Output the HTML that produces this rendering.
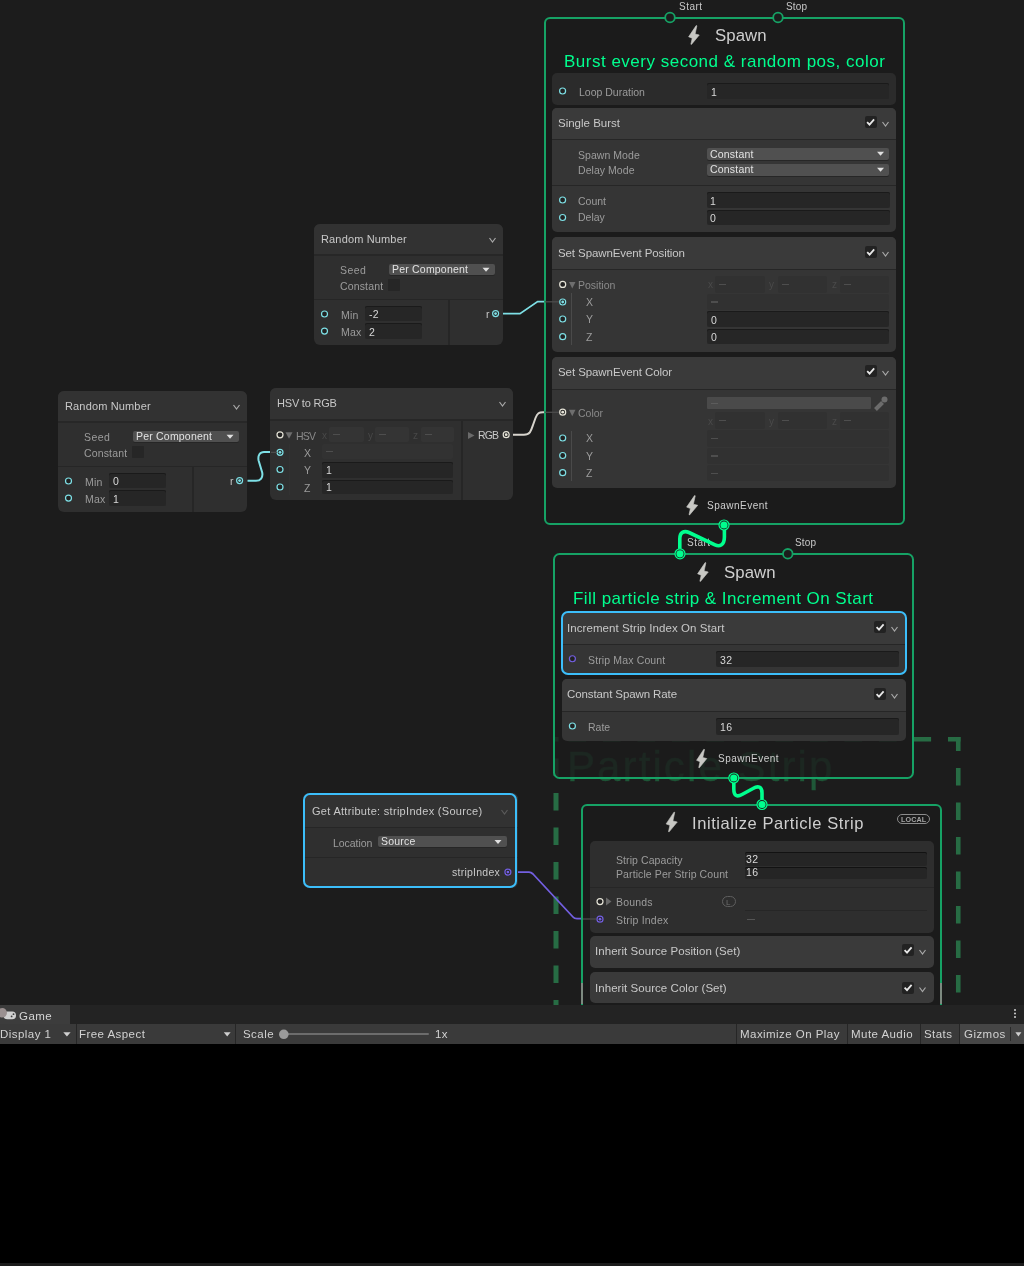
<!DOCTYPE html><html><head><meta charset="utf-8"><style>html,body{margin:0;padding:0;width:1024px;height:1266px;overflow:hidden;background:#1c1c1c;}.r,.t{position:absolute;}.t{white-space:nowrap;font-family:"Liberation Sans",sans-serif;will-change:transform;}svg{position:absolute;left:0;top:0;}#graph{position:absolute;left:0;top:0;width:1024px;height:1005px;overflow:hidden;background:#1c1c1c;}</style></head><body><div id="graph"><svg width="1024" height="1005"><line x1="553" y1="739.25" x2="960.5" y2="739.25" stroke="#276c44" stroke-width="4.5" stroke-dasharray="17.6 16.9" stroke-dashoffset="19"/><line x1="556" y1="737" x2="556" y2="1005" stroke="#276c44" stroke-width="5" stroke-dasharray="17.6 16.9" stroke-dashoffset="13"/><line x1="958.25" y1="737" x2="958.25" y2="1004" stroke="#276c44" stroke-width="4.6" stroke-dasharray="17.6 16.9" stroke-dashoffset="3.5"/></svg><div class="t" style="left:566.60px;top:746.45px;font-size:42px;line-height:42px;color:#1f5838;letter-spacing:2.1px;-webkit-text-stroke:0.3px #1f5838;">Particle Strip</div><svg width="1024" height="1005"><path d="M503,313.7 L520,313.7 L537.6,301.6 L545,301.6" fill="none" stroke="#7ee0e6" stroke-width="1.8"/><path d="M247.5,480.8 L256,480.8 C260.5,480.8 263.2,477.5 262.2,472.5 L258.6,460.5 C257.6,455.5 260,451.9 264,451.9 L271,451.9" fill="none" stroke="#7ee0e6" stroke-width="2"/><path d="M513,434.7 L524,434.7 C530,434.7 531,431 533,425 L535.5,418 C537.5,413 539,412.2 543,412.2 L545,412.2" fill="none" stroke="#d7d4cd" stroke-width="2"/><path d="M517.6,872.1 L529,872.1 C531,872.1 532,873 533,874 L573,917 C574,918.3 575,918.7 577,918.7 L583,918.7" fill="none" stroke="#735fe1" stroke-width="1.8"/></svg><div class="r" style="left:314.00px;top:223.50px;width:189.00px;height:121.00px;background:#2f2f2f;border-radius:6px;"></div><div class="r" style="left:314.00px;top:223.50px;width:189.00px;height:31.50px;background:#323232;border-radius:6px 6px 0 0;"></div><div class="r" style="left:314.00px;top:254.00px;width:189.00px;height:2.20px;background:#272727;"></div><div class="t" style="left:320.80px;top:234.39px;font-size:11px;line-height:11px;color:#c8c8c8;letter-spacing:0.15px;">Random Number</div><div class="t" style="left:340.25px;top:265.21px;font-size:10.5px;line-height:10.5px;color:#9c9c9c;letter-spacing:0.4px;">Seed</div><div class="t" style="left:340.25px;top:280.61px;font-size:10.5px;line-height:10.5px;color:#9c9c9c;letter-spacing:0.15px;">Constant</div><div class="r" style="left:388.25px;top:279.25px;width:11.75px;height:11.25px;background:#262626;border-radius:1px;"></div><div class="r" style="left:389.25px;top:264.00px;width:105.25px;height:11.00px;background:#505050;border-radius:2px;box-shadow:0 1px 0 #262626;"></div><div class="t" style="left:392.25px;top:263.71px;font-size:10.5px;line-height:10.5px;color:#e2e2e2;letter-spacing:0.2px;">Per Component</div><div class="r" style="left:314.00px;top:298.50px;width:189.00px;height:1.80px;background:#262626;"></div><div class="r" style="left:448.00px;top:300.25px;width:2.00px;height:44.25px;background:#262626;"></div><div class="t" style="left:340.50px;top:309.61px;font-size:10.5px;line-height:10.5px;color:#9c9c9c;letter-spacing:0.2px;">Min</div><div class="t" style="left:340.50px;top:326.51px;font-size:10.5px;line-height:10.5px;color:#9c9c9c;letter-spacing:0.2px;">Max</div><div class="r" style="left:365.25px;top:306.10px;width:56.25px;height:15.40px;background:#262626;border-radius:2px;box-shadow:inset 0 1px 0 #1a1a1a;"></div><div class="t" style="left:368.75px;top:309.01px;font-size:10.5px;line-height:10.5px;color:#d8d8d8;letter-spacing:0.3px;">-2</div><div class="r" style="left:365.25px;top:323.40px;width:56.25px;height:15.85px;background:#262626;border-radius:2px;box-shadow:inset 0 1px 0 #1a1a1a;"></div><div class="t" style="left:368.75px;top:326.76px;font-size:10.5px;line-height:10.5px;color:#d8d8d8;letter-spacing:0.3px;">2</div><div class="t" style="left:485.60px;top:308.81px;font-size:10.5px;line-height:10.5px;color:#c8c8c8;">r</div><div class="r" style="left:58.00px;top:390.50px;width:189.00px;height:121.00px;background:#2f2f2f;border-radius:6px;"></div><div class="r" style="left:58.00px;top:390.50px;width:189.00px;height:31.50px;background:#323232;border-radius:6px 6px 0 0;"></div><div class="r" style="left:58.00px;top:421.00px;width:189.00px;height:2.20px;background:#272727;"></div><div class="t" style="left:64.80px;top:401.39px;font-size:11px;line-height:11px;color:#c8c8c8;letter-spacing:0.15px;">Random Number</div><div class="t" style="left:84.25px;top:432.21px;font-size:10.5px;line-height:10.5px;color:#9c9c9c;letter-spacing:0.4px;">Seed</div><div class="t" style="left:84.25px;top:447.61px;font-size:10.5px;line-height:10.5px;color:#9c9c9c;letter-spacing:0.15px;">Constant</div><div class="r" style="left:132.25px;top:446.25px;width:11.75px;height:11.25px;background:#262626;border-radius:1px;"></div><div class="r" style="left:133.25px;top:431.00px;width:105.25px;height:11.00px;background:#505050;border-radius:2px;box-shadow:0 1px 0 #262626;"></div><div class="t" style="left:136.25px;top:430.71px;font-size:10.5px;line-height:10.5px;color:#e2e2e2;letter-spacing:0.2px;">Per Component</div><div class="r" style="left:58.00px;top:465.50px;width:189.00px;height:1.80px;background:#262626;"></div><div class="r" style="left:192.00px;top:467.25px;width:2.00px;height:44.25px;background:#262626;"></div><div class="t" style="left:84.50px;top:476.61px;font-size:10.5px;line-height:10.5px;color:#9c9c9c;letter-spacing:0.2px;">Min</div><div class="t" style="left:84.50px;top:493.51px;font-size:10.5px;line-height:10.5px;color:#9c9c9c;letter-spacing:0.2px;">Max</div><div class="r" style="left:109.25px;top:473.10px;width:56.25px;height:15.40px;background:#262626;border-radius:2px;box-shadow:inset 0 1px 0 #1a1a1a;"></div><div class="t" style="left:112.75px;top:476.01px;font-size:10.5px;line-height:10.5px;color:#d8d8d8;letter-spacing:0.3px;">0</div><div class="r" style="left:109.25px;top:490.40px;width:56.25px;height:15.85px;background:#262626;border-radius:2px;box-shadow:inset 0 1px 0 #1a1a1a;"></div><div class="t" style="left:112.75px;top:493.76px;font-size:10.5px;line-height:10.5px;color:#d8d8d8;letter-spacing:0.3px;">1</div><div class="t" style="left:229.60px;top:475.81px;font-size:10.5px;line-height:10.5px;color:#c8c8c8;">r</div><div class="r" style="left:270.30px;top:388.40px;width:242.40px;height:111.60px;background:#2f2f2f;border-radius:6px;"></div><div class="r" style="left:270.30px;top:388.40px;width:242.40px;height:31.60px;background:#323232;border-radius:6px 6px 0 0;"></div><div class="r" style="left:270.30px;top:419.00px;width:242.40px;height:2.20px;background:#272727;"></div><div class="t" style="left:277.30px;top:398.39px;font-size:11px;line-height:11px;color:#c8c8c8;letter-spacing:-0.2px;">HSV to RGB</div><div class="r" style="left:460.50px;top:421.00px;width:2.00px;height:79.00px;background:#262626;"></div><div class="t" style="left:296.40px;top:430.81px;font-size:10.5px;line-height:10.5px;color:#8a8a8a;letter-spacing:-0.8px;">HSV</div><div class="t" style="left:322.00px;top:431.04px;font-size:10px;line-height:10px;color:#484848;">x</div><div class="r" style="left:329.20px;top:427.30px;width:34.40px;height:14.70px;background:#343434;border-radius:2px;"></div><div class="r" style="left:333.20px;top:434.15px;width:7.00px;height:1.20px;background:#4e4e4e;"></div><div class="t" style="left:368.00px;top:431.04px;font-size:10px;line-height:10px;color:#484848;">y</div><div class="r" style="left:375.00px;top:427.30px;width:34.00px;height:14.70px;background:#343434;border-radius:2px;"></div><div class="r" style="left:379.00px;top:434.15px;width:7.00px;height:1.20px;background:#4e4e4e;"></div><div class="t" style="left:412.50px;top:431.04px;font-size:10px;line-height:10px;color:#484848;">z</div><div class="r" style="left:420.80px;top:427.30px;width:33.00px;height:14.70px;background:#343434;border-radius:2px;"></div><div class="r" style="left:424.80px;top:434.15px;width:7.00px;height:1.20px;background:#4e4e4e;"></div><div class="r" style="left:288.60px;top:444.00px;width:1.00px;height:50.50px;background:#323232;"></div><div class="t" style="left:304.20px;top:447.81px;font-size:10.5px;line-height:10.5px;color:#9c9c9c;">X</div><div class="t" style="left:304.20px;top:465.21px;font-size:10.5px;line-height:10.5px;color:#9c9c9c;">Y</div><div class="t" style="left:304.20px;top:482.61px;font-size:10.5px;line-height:10.5px;color:#9c9c9c;">Z</div><div class="r" style="left:322.20px;top:443.70px;width:131.30px;height:15.60px;background:#323232;border-radius:2px;"></div><div class="r" style="left:326.20px;top:451.00px;width:7.00px;height:1.20px;background:#4e4e4e;"></div><div class="r" style="left:322.20px;top:462.00px;width:131.30px;height:15.80px;background:#262626;border-radius:2px;box-shadow:inset 0 1px 0 #1a1a1a;"></div><div class="t" style="left:325.70px;top:465.31px;font-size:10.5px;line-height:10.5px;color:#d8d8d8;letter-spacing:0.3px;">1</div><div class="r" style="left:322.20px;top:479.60px;width:131.30px;height:14.90px;background:#262626;border-radius:2px;box-shadow:inset 0 1px 0 #1a1a1a;"></div><div class="t" style="left:325.70px;top:482.01px;font-size:10.5px;line-height:10.5px;color:#d8d8d8;letter-spacing:0.3px;">1</div><div class="t" style="left:477.60px;top:430.31px;font-size:10.5px;line-height:10.5px;color:#c8c8c8;letter-spacing:-0.9px;">RGB</div><div class="r" style="left:303.00px;top:793.30px;width:214.60px;height:95.00px;background:#2f2f2f;border-radius:6px;"></div><div class="r" style="left:303.00px;top:793.30px;width:214.60px;height:34.00px;background:#323232;border-radius:6px 6px 0 0;"></div><div class="r" style="left:303.00px;top:827.30px;width:214.60px;height:1.00px;background:#262626;"></div><div class="r" style="left:303.00px;top:857.20px;width:214.60px;height:1.00px;background:#262626;"></div><div class="r" style="left:302.70px;top:793.00px;width:210.40px;height:90.80px;border:2.4px solid #3cbefa;border-radius:7px;background:transparent;"></div><div class="t" style="left:312.25px;top:806.49px;font-size:11px;line-height:11px;color:#c8c8c8;letter-spacing:0.3px;">Get Attribute: stripIndex (Source)</div><div class="t" style="left:332.50px;top:837.91px;font-size:10.5px;line-height:10.5px;color:#9c9c9c;letter-spacing:-0.05px;">Location</div><div class="r" style="left:377.50px;top:836.10px;width:129.00px;height:11.30px;background:#505050;border-radius:2px;box-shadow:0 1px 0 #262626;"></div><div class="t" style="left:380.50px;top:836.11px;font-size:10.5px;line-height:10.5px;color:#e2e2e2;letter-spacing:0.2px;">Source</div><div class="t" style="left:452.20px;top:867.41px;font-size:10.5px;line-height:10.5px;color:#c8c8c8;letter-spacing:0.25px;">stripIndex</div><div class="r" style="left:544.00px;top:17.00px;width:357.00px;height:504.00px;border:2px solid #16a265;border-radius:6px;background:rgba(28,28,28,0.8);"></div><div class="t" style="left:678.50px;top:2.23px;font-size:10px;line-height:10px;color:#c8c8c8;letter-spacing:0.47px;">Start</div><div class="t" style="left:785.50px;top:2.23px;font-size:10px;line-height:10px;color:#c8c8c8;letter-spacing:0.15px;">Stop</div><div class="t" style="left:714.80px;top:28.28px;font-size:16.8px;line-height:16.8px;color:#cfcfcf;letter-spacing:0.05px;">Spawn</div><div class="t" style="left:563.50px;top:52.81px;font-size:17px;line-height:17px;color:#00fe8e;letter-spacing:0.5px;">Burst every second &amp; random pos, color</div><div class="r" style="left:552.00px;top:73.00px;width:344.00px;height:32.00px;background:#2b2b2b;border-radius:5px;"></div><div class="t" style="left:578.50px;top:86.81px;font-size:10.5px;line-height:10.5px;color:#9c9c9c;">Loop Duration</div><div class="r" style="left:707.00px;top:83.00px;width:182.00px;height:16.00px;background:#262626;border-radius:2px;box-shadow:inset 0 1px 0 #1a1a1a;"></div><div class="t" style="left:710.50px;top:86.51px;font-size:10.5px;line-height:10.5px;color:#d8d8d8;letter-spacing:0.3px;">1</div><div class="r" style="left:552.00px;top:108.00px;width:344.00px;height:124.00px;background:#353535;border-radius:5px;"></div><div class="r" style="left:552.00px;top:108.00px;width:344.00px;height:31.00px;background:#3a3a3a;border-radius:5px 5px 0 0;"></div><div class="r" style="left:552.00px;top:139.00px;width:344.00px;height:1.00px;background:#262626;"></div><div class="t" style="left:558.30px;top:118.27px;font-size:11.5px;line-height:11.5px;color:#c8c8c8;">Single Burst</div><div class="r" style="left:864.50px;top:116.00px;width:12.00px;height:12.00px;background:#222222;border-radius:2px;"></div><div class="t" style="left:578.40px;top:149.71px;font-size:10.5px;line-height:10.5px;color:#9c9c9c;letter-spacing:0.05px;">Spawn Mode</div><div class="t" style="left:578.40px;top:165.31px;font-size:10.5px;line-height:10.5px;color:#9c9c9c;letter-spacing:0.05px;">Delay Mode</div><div class="r" style="left:707.00px;top:148.00px;width:182.00px;height:12.00px;background:#505050;border-radius:2px;box-shadow:0 1px 0 #262626;"></div><div class="t" style="left:710.00px;top:148.71px;font-size:10.5px;line-height:10.5px;color:#e2e2e2;letter-spacing:0.2px;">Constant</div><div class="r" style="left:707.00px;top:164.00px;width:182.00px;height:11.50px;background:#505050;border-radius:2px;box-shadow:0 1px 0 #262626;"></div><div class="t" style="left:710.00px;top:164.21px;font-size:10.5px;line-height:10.5px;color:#e2e2e2;letter-spacing:0.2px;">Constant</div><div class="r" style="left:552.00px;top:185.00px;width:344.00px;height:1.00px;background:#262626;"></div><div class="t" style="left:578.40px;top:196.01px;font-size:10.5px;line-height:10.5px;color:#9c9c9c;">Count</div><div class="t" style="left:578.40px;top:212.21px;font-size:10.5px;line-height:10.5px;color:#9c9c9c;">Delay</div><div class="r" style="left:706.50px;top:192.30px;width:183.00px;height:16.10px;background:#262626;border-radius:2px;box-shadow:inset 0 1px 0 #1a1a1a;"></div><div class="t" style="left:710.00px;top:195.91px;font-size:10.5px;line-height:10.5px;color:#d8d8d8;letter-spacing:0.3px;">1</div><div class="r" style="left:706.50px;top:209.90px;width:183.00px;height:15.60px;background:#262626;border-radius:2px;box-shadow:inset 0 1px 0 #1a1a1a;"></div><div class="t" style="left:710.00px;top:213.01px;font-size:10.5px;line-height:10.5px;color:#d8d8d8;letter-spacing:0.3px;">0</div><div class="r" style="left:552.00px;top:237.00px;width:344.00px;height:114.50px;background:#353535;border-radius:5px;"></div><div class="r" style="left:552.00px;top:237.00px;width:344.00px;height:32.00px;background:#3a3a3a;border-radius:5px 5px 0 0;"></div><div class="r" style="left:552.00px;top:269.00px;width:344.00px;height:1.00px;background:#262626;"></div><div class="t" style="left:558.40px;top:248.27px;font-size:11.5px;line-height:11.5px;color:#c8c8c8;letter-spacing:-0.1px;">Set SpawnEvent Position</div><div class="r" style="left:864.60px;top:246.00px;width:12.00px;height:12.00px;background:#222222;border-radius:2px;"></div><div class="t" style="left:578.30px;top:280.21px;font-size:10.5px;line-height:10.5px;color:#8a8a8a;">Position</div><div class="r" style="left:571.00px;top:293.00px;width:1.00px;height:52.00px;background:#4a4a4a;"></div><div class="t" style="left:586.00px;top:296.61px;font-size:10.5px;line-height:10.5px;color:#9c9c9c;">X</div><div class="t" style="left:586.00px;top:314.11px;font-size:10.5px;line-height:10.5px;color:#9c9c9c;">Y</div><div class="t" style="left:586.00px;top:331.61px;font-size:10.5px;line-height:10.5px;color:#9c9c9c;">Z</div><div class="t" style="left:707.50px;top:280.04px;font-size:10px;line-height:10px;color:#4a4a4a;">x</div><div class="r" style="left:715.00px;top:276.00px;width:50.00px;height:16.60px;background:#313131;border-radius:2px;"></div><div class="r" style="left:719.00px;top:283.80px;width:7.00px;height:1.20px;background:#4e4e4e;"></div><div class="t" style="left:769.00px;top:280.04px;font-size:10px;line-height:10px;color:#4a4a4a;">y</div><div class="r" style="left:777.70px;top:276.00px;width:49.30px;height:16.60px;background:#313131;border-radius:2px;"></div><div class="r" style="left:781.70px;top:283.80px;width:7.00px;height:1.20px;background:#4e4e4e;"></div><div class="t" style="left:832.00px;top:280.04px;font-size:10px;line-height:10px;color:#4a4a4a;">z</div><div class="r" style="left:840.00px;top:276.00px;width:49.00px;height:16.60px;background:#313131;border-radius:2px;"></div><div class="r" style="left:844.00px;top:283.80px;width:7.00px;height:1.20px;background:#4e4e4e;"></div><div class="r" style="left:707.40px;top:293.60px;width:182.10px;height:16.60px;background:#313131;border-radius:2px;"></div><div class="r" style="left:711.40px;top:301.40px;width:7.00px;height:1.20px;background:#4e4e4e;"></div><div class="r" style="left:707.40px;top:311.20px;width:182.10px;height:16.20px;background:#262626;border-radius:2px;box-shadow:inset 0 1px 0 #1a1a1a;"></div><div class="t" style="left:710.90px;top:314.91px;font-size:10.5px;line-height:10.5px;color:#d8d8d8;letter-spacing:0.3px;">0</div><div class="r" style="left:707.40px;top:329.20px;width:182.10px;height:15.20px;background:#262626;border-radius:2px;box-shadow:inset 0 1px 0 #1a1a1a;"></div><div class="t" style="left:710.90px;top:331.91px;font-size:10.5px;line-height:10.5px;color:#d8d8d8;letter-spacing:0.3px;">0</div><div class="r" style="left:552.00px;top:357.00px;width:344.00px;height:130.50px;background:#353535;border-radius:5px;"></div><div class="r" style="left:552.00px;top:357.00px;width:344.00px;height:31.50px;background:#3a3a3a;border-radius:5px 5px 0 0;"></div><div class="r" style="left:552.00px;top:388.50px;width:344.00px;height:1.00px;background:#262626;"></div><div class="t" style="left:558.40px;top:366.77px;font-size:11.5px;line-height:11.5px;color:#c8c8c8;letter-spacing:-0.08px;">Set SpawnEvent Color</div><div class="r" style="left:864.60px;top:365.00px;width:12.00px;height:12.00px;background:#222222;border-radius:2px;"></div><div class="r" style="left:706.80px;top:397.00px;width:164.50px;height:12.00px;background:#4a4a4a;border-radius:1px;"></div><div class="r" style="left:711.00px;top:402.50px;width:7.00px;height:1.20px;background:#5c5c5c;"></div><div class="t" style="left:578.30px;top:408.01px;font-size:10.5px;line-height:10.5px;color:#8a8a8a;">Color</div><div class="t" style="left:707.50px;top:417.04px;font-size:10px;line-height:10px;color:#4a4a4a;">x</div><div class="r" style="left:715.00px;top:412.00px;width:50.00px;height:16.80px;background:#313131;border-radius:2px;"></div><div class="r" style="left:719.00px;top:419.90px;width:7.00px;height:1.20px;background:#4e4e4e;"></div><div class="t" style="left:769.00px;top:417.04px;font-size:10px;line-height:10px;color:#4a4a4a;">y</div><div class="r" style="left:777.70px;top:412.00px;width:49.30px;height:16.80px;background:#313131;border-radius:2px;"></div><div class="r" style="left:781.70px;top:419.90px;width:7.00px;height:1.20px;background:#4e4e4e;"></div><div class="t" style="left:832.00px;top:417.04px;font-size:10px;line-height:10px;color:#4a4a4a;">z</div><div class="r" style="left:840.00px;top:412.00px;width:49.00px;height:16.80px;background:#313131;border-radius:2px;"></div><div class="r" style="left:844.00px;top:419.90px;width:7.00px;height:1.20px;background:#4e4e4e;"></div><div class="r" style="left:571.00px;top:430.50px;width:1.00px;height:50.50px;background:#4a4a4a;"></div><div class="t" style="left:586.00px;top:433.01px;font-size:10.5px;line-height:10.5px;color:#9c9c9c;">X</div><div class="t" style="left:586.00px;top:450.51px;font-size:10.5px;line-height:10.5px;color:#9c9c9c;">Y</div><div class="t" style="left:586.00px;top:467.81px;font-size:10.5px;line-height:10.5px;color:#9c9c9c;">Z</div><div class="r" style="left:707.40px;top:430.20px;width:182.10px;height:16.60px;background:#313131;border-radius:2px;"></div><div class="r" style="left:711.40px;top:438.00px;width:7.00px;height:1.20px;background:#4e4e4e;"></div><div class="r" style="left:707.40px;top:447.80px;width:182.10px;height:16.20px;background:#313131;border-radius:2px;"></div><div class="r" style="left:711.40px;top:455.40px;width:7.00px;height:1.20px;background:#4e4e4e;"></div><div class="r" style="left:707.40px;top:465.40px;width:182.10px;height:15.60px;background:#313131;border-radius:2px;"></div><div class="r" style="left:711.40px;top:472.70px;width:7.00px;height:1.20px;background:#4e4e4e;"></div><div class="t" style="left:707.20px;top:501.34px;font-size:10px;line-height:10px;color:#cfcfcf;letter-spacing:0.49px;">SpawnEvent</div><div class="r" style="left:553.30px;top:553.00px;width:356.70px;height:222.00px;border:2px solid #16a265;border-radius:6.5px;background:rgba(28,28,28,0.8);"></div><div class="t" style="left:687.30px;top:538.24px;font-size:10px;line-height:10px;color:#c8c8c8;letter-spacing:0.47px;">Start</div><div class="t" style="left:795.00px;top:538.24px;font-size:10px;line-height:10px;color:#c8c8c8;letter-spacing:0.15px;">Stop</div><div class="t" style="left:723.60px;top:564.58px;font-size:16.8px;line-height:16.8px;color:#cfcfcf;letter-spacing:0.05px;">Spawn</div><div class="t" style="left:573.00px;top:590.11px;font-size:17px;line-height:17px;color:#00fe8e;letter-spacing:0.45px;">Fill particle strip &amp; Increment On Start</div><div class="r" style="left:562.00px;top:612.00px;width:344.00px;height:62.00px;background:#353535;border-radius:5px;"></div><div class="r" style="left:562.00px;top:612.00px;width:344.00px;height:32.40px;background:#3a3a3a;border-radius:5px 5px 0 0;"></div><div class="r" style="left:562.00px;top:644.40px;width:344.00px;height:1.00px;background:#262626;"></div><div class="r" style="left:560.80px;top:610.80px;width:341.80px;height:59.80px;border:2.4px solid #3cbefa;border-radius:7px;background:transparent;"></div><div class="t" style="left:567.40px;top:623.07px;font-size:11.5px;line-height:11.5px;color:#c8c8c8;letter-spacing:0.07px;">Increment Strip Index On Start</div><div class="r" style="left:874.00px;top:621.00px;width:12.00px;height:12.00px;background:#222222;border-radius:2px;"></div><div class="t" style="left:588.25px;top:654.91px;font-size:10.5px;line-height:10.5px;color:#9c9c9c;letter-spacing:0.14px;">Strip Max Count</div><div class="r" style="left:716.00px;top:651.40px;width:183.00px;height:16.10px;background:#262626;border-radius:2px;box-shadow:inset 0 1px 0 #1a1a1a;"></div><div class="t" style="left:719.50px;top:655.01px;font-size:10.5px;line-height:10.5px;color:#d8d8d8;letter-spacing:0.3px;">32</div><div class="r" style="left:562.00px;top:679.00px;width:344.00px;height:62.20px;background:#353535;border-radius:5px;"></div><div class="r" style="left:562.00px;top:679.00px;width:344.00px;height:32.20px;background:#3a3a3a;border-radius:5px 5px 0 0;"></div><div class="r" style="left:562.00px;top:711.20px;width:344.00px;height:1.00px;background:#262626;"></div><div class="t" style="left:567.30px;top:689.17px;font-size:11.5px;line-height:11.5px;color:#c8c8c8;letter-spacing:-0.1px;">Constant Spawn Rate</div><div class="r" style="left:874.00px;top:688.00px;width:12.00px;height:12.00px;background:#222222;border-radius:2px;"></div><div class="t" style="left:588.30px;top:721.61px;font-size:10.5px;line-height:10.5px;color:#9c9c9c;">Rate</div><div class="r" style="left:716.00px;top:718.40px;width:183.00px;height:16.30px;background:#262626;border-radius:2px;box-shadow:inset 0 1px 0 #1a1a1a;"></div><div class="t" style="left:719.50px;top:722.21px;font-size:10.5px;line-height:10.5px;color:#d8d8d8;letter-spacing:0.3px;">16</div><div class="t" style="left:717.70px;top:754.33px;font-size:10px;line-height:10px;color:#cfcfcf;letter-spacing:0.49px;">SpawnEvent</div><div class="r" style="left:581.20px;top:804.00px;width:356.80px;height:222.00px;border:2px solid #16a265;border-radius:6px;background:rgba(28,28,28,0.8);"></div><div class="t" style="left:691.60px;top:815.23px;font-size:16.5px;line-height:16.5px;color:#cfcfcf;letter-spacing:0.57px;">Initialize Particle Strip</div><div class="r" style="left:897px;top:814.2px;width:31px;height:8px;border:1.4px solid #8c8c8c;border-radius:6px;"></div><div class="t" style="left:901.40px;top:816.41px;font-size:7.2px;line-height:7.2px;color:#a4a4a4;letter-spacing:0.1px;font-weight:bold;">LOCAL</div><div class="r" style="left:589.50px;top:841.00px;width:344.50px;height:91.50px;background:#2e2e2e;border-radius:5px;"></div><div class="r" style="left:589.50px;top:887.00px;width:344.50px;height:1.00px;background:#262626;"></div><div class="t" style="left:616.40px;top:855.11px;font-size:10.5px;line-height:10.5px;color:#9c9c9c;letter-spacing:0.08px;">Strip Capacity</div><div class="t" style="left:616.40px;top:869.11px;font-size:10.5px;line-height:10.5px;color:#9c9c9c;letter-spacing:0.1px;">Particle Per Strip Count</div><div class="r" style="left:744.50px;top:852.30px;width:182.10px;height:13.70px;background:#252525;border-radius:2px;box-shadow:inset 0 1px 0 #121212;"></div><div class="t" style="left:746.30px;top:853.51px;font-size:10.5px;line-height:10.5px;color:#dadada;letter-spacing:0.3px;">32</div><div class="r" style="left:744.50px;top:866.70px;width:182.10px;height:12.50px;background:#252525;border-radius:2px;box-shadow:inset 0 1px 0 #121212;"></div><div class="t" style="left:746.30px;top:866.71px;font-size:10.5px;line-height:10.5px;color:#dadada;letter-spacing:0.3px;">16</div><div class="t" style="left:616.40px;top:896.81px;font-size:10.5px;line-height:10.5px;color:#9c9c9c;letter-spacing:0.2px;">Bounds</div><div class="r" style="left:722px;top:896.3px;width:11.6px;height:8.4px;border:1.2px solid #5e5e5e;border-radius:6px;"></div><div class="t" style="left:726.30px;top:898.73px;font-size:8px;line-height:8px;color:#6e6e6e;">L</div><div class="r" style="left:744.50px;top:910.20px;width:182.10px;height:1.00px;background:#262626;"></div><div class="t" style="left:616.40px;top:914.61px;font-size:10.5px;line-height:10.5px;color:#9c9c9c;letter-spacing:0.2px;">Strip Index</div><div class="r" style="left:747.00px;top:919.00px;width:8.00px;height:1.20px;background:#555555;"></div><div class="r" style="left:589.50px;top:936.00px;width:344.50px;height:31.50px;background:#3a3a3a;border-radius:5px;"></div><div class="t" style="left:595.40px;top:945.77px;font-size:11.5px;line-height:11.5px;color:#c8c8c8;letter-spacing:0.05px;">Inherit Source Position (Set)</div><div class="r" style="left:902.00px;top:944.00px;width:12.00px;height:12.00px;background:#222222;border-radius:2px;"></div><div class="r" style="left:589.50px;top:972.00px;width:344.50px;height:30.50px;background:#3a3a3a;border-radius:5px;"></div><div class="r" style="left:940.00px;top:983.00px;width:2.00px;height:21.00px;background:#7d8a80;"></div><div class="r" style="left:581.20px;top:983.00px;width:2.00px;height:21.00px;background:#7d8a80;"></div><div class="t" style="left:595.40px;top:982.77px;font-size:11.5px;line-height:11.5px;color:#c8c8c8;letter-spacing:0.05px;">Inherit Source Color (Set)</div><div class="r" style="left:902.00px;top:981.50px;width:12.00px;height:12.00px;background:#222222;border-radius:2px;"></div><svg width="1024" height="1005"><polyline points="489.5,238.0 492.5,242.0 495.5,238.0" fill="none" stroke="#a8a8a8" stroke-width="1.2"/><polygon points="482.5,267.8 489.5,267.8 486.0,271.8" fill="#e0e0e0"/><circle cx="324.5" cy="314.0" r="3.0" fill="#222" stroke="#7ee0e6" stroke-width="1.2"/><circle cx="324.5" cy="331.1" r="3.0" fill="#222" stroke="#7ee0e6" stroke-width="1.2"/><circle cx="495.6" cy="313.6" r="3.0" fill="#222" stroke="#7ee0e6" stroke-width="1.2"/><circle cx="495.6" cy="313.6" r="1.4" fill="#7ee0e6"/><polyline points="233.5,405.0 236.5,409.0 239.5,405.0" fill="none" stroke="#a8a8a8" stroke-width="1.2"/><polygon points="226.5,434.8 233.5,434.8 230.0,438.8" fill="#e0e0e0"/><circle cx="68.5" cy="481.0" r="3.0" fill="#222" stroke="#7ee0e6" stroke-width="1.2"/><circle cx="68.5" cy="498.1" r="3.0" fill="#222" stroke="#7ee0e6" stroke-width="1.2"/><circle cx="239.6" cy="480.6" r="3.0" fill="#222" stroke="#7ee0e6" stroke-width="1.2"/><circle cx="239.6" cy="480.6" r="1.4" fill="#7ee0e6"/><polyline points="499.5,402 502.5,406 505.5,402" fill="none" stroke="#a8a8a8" stroke-width="1.2"/><circle cx="280" cy="434.8" r="3.0" fill="#222" stroke="#e6e4d8" stroke-width="1.2"/><polygon points="285.5,432.3 292.5,432.3 289.0,438.8" fill="#6e6e6e"/><circle cx="280" cy="452.3" r="3.0" fill="#222" stroke="#7ee0e6" stroke-width="1.2"/><circle cx="280" cy="452.3" r="1.4" fill="#7ee0e6"/><circle cx="280" cy="469.5" r="3.0" fill="#222" stroke="#7ee0e6" stroke-width="1.2"/><circle cx="280" cy="487" r="3.0" fill="#222" stroke="#7ee0e6" stroke-width="1.2"/><polygon points="468,432 474.5,435.5 468,439" fill="#6a6a6a"/><circle cx="506.2" cy="434.7" r="3.0" fill="#222" stroke="#e6e4d8" stroke-width="1.2"/><circle cx="506.2" cy="434.7" r="1.4" fill="#e6e4d8"/><polyline points="501.5,810 504.5,814 507.5,810" fill="none" stroke="#5a5a5a" stroke-width="1.2"/><polygon points="494.5,839.9 501.5,839.9 498.0,843.9" fill="#e0e0e0"/><circle cx="507.9" cy="872.1" r="3.0" fill="#222" stroke="#735fe1" stroke-width="1.2"/><circle cx="507.9" cy="872.1" r="1.4" fill="#735fe1"/><polygon points="696.16,25.60 696.88,25.80 695.08,34.00 699.28,35.00 691.48,44.40 690.88,44.20 692.20,38.20 688.60,36.80" fill="#c8c8c4" stroke="#c8c8c4" stroke-width="0.6" stroke-linejoin="round"/><circle cx="562.6" cy="91" r="3.0" fill="#222" stroke="#7ee0e6" stroke-width="1.2"/><polyline points="867.1,122.2 869.5,124.6 874.1,119.4" fill="none" stroke="#e8e8e8" stroke-width="1.8"/><polyline points="882.5,122 885.5,126 888.5,122" fill="none" stroke="#a8a8a8" stroke-width="1.2"/><polygon points="877,151.8 884,151.8 880.5,155.8" fill="#e0e0e0"/><polygon points="877,167.8 884,167.8 880.5,171.8" fill="#e0e0e0"/><circle cx="562.6" cy="200" r="3.0" fill="#222" stroke="#7ee0e6" stroke-width="1.2"/><circle cx="562.6" cy="217.5" r="3.0" fill="#222" stroke="#7ee0e6" stroke-width="1.2"/><polyline points="867.2,252.2 869.6,254.6 874.2,249.4" fill="none" stroke="#e8e8e8" stroke-width="1.8"/><polyline points="882.5,252 885.5,256 888.5,252" fill="none" stroke="#a8a8a8" stroke-width="1.2"/><circle cx="562.7" cy="284.4" r="3.0" fill="#222" stroke="#e6e4d8" stroke-width="1.2"/><polygon points="569,282 575.5,282 572.25,288.5" fill="#6e6e6e"/><circle cx="562.7" cy="302" r="3.0" fill="#222" stroke="#7ee0e6" stroke-width="1.2"/><circle cx="562.7" cy="302" r="1.4" fill="#7ee0e6"/><circle cx="562.7" cy="319" r="3.0" fill="#222" stroke="#7ee0e6" stroke-width="1.2"/><circle cx="562.7" cy="336.7" r="3.0" fill="#222" stroke="#7ee0e6" stroke-width="1.2"/><polyline points="867.2,371.2 869.6,373.6 874.2,368.4" fill="none" stroke="#e8e8e8" stroke-width="1.8"/><polyline points="882.5,371 885.5,375 888.5,371" fill="none" stroke="#a8a8a8" stroke-width="1.2"/><g fill="#6c6c6c"><rect x="877" y="401" width="4" height="10" transform="rotate(45 879 406)"/><circle cx="884.5" cy="399.5" r="3"/></g><circle cx="562.7" cy="412.2" r="3.0" fill="#222" stroke="#e6e4d8" stroke-width="1.2"/><circle cx="562.7" cy="412.2" r="1.4" fill="#e6e4d8"/><polygon points="569,409.8 575.5,409.8 572.25,416.3" fill="#6e6e6e"/><circle cx="562.7" cy="438" r="3.0" fill="#222" stroke="#7ee0e6" stroke-width="1.2"/><circle cx="562.7" cy="455.5" r="3.0" fill="#222" stroke="#7ee0e6" stroke-width="1.2"/><circle cx="562.7" cy="472.7" r="3.0" fill="#222" stroke="#7ee0e6" stroke-width="1.2"/><polygon points="694.50,495.62 695.25,495.82 693.38,504.23 697.75,505.25 689.62,514.88 689.00,514.68 690.38,508.53 686.62,507.10" fill="#c8c8c4" stroke="#c8c8c4" stroke-width="0.6" stroke-linejoin="round"/><polygon points="705.16,562.60 705.88,562.80 704.08,571.00 708.28,572.00 700.48,581.40 699.88,581.20 701.20,575.20 697.60,573.80" fill="#c8c8c4" stroke="#c8c8c4" stroke-width="0.6" stroke-linejoin="round"/><polyline points="876.6,627.2 879.0,629.6 883.6,624.4" fill="none" stroke="#e8e8e8" stroke-width="1.8"/><polyline points="891.5,627 894.5,631 897.5,627" fill="none" stroke="#a8a8a8" stroke-width="1.2"/><circle cx="572.4" cy="658.75" r="3.0" fill="#222" stroke="#735fe1" stroke-width="1.2"/><polyline points="876.6,694.2 879.0,696.6 883.6,691.4" fill="none" stroke="#e8e8e8" stroke-width="1.8"/><polyline points="891.5,694 894.5,698 897.5,694" fill="none" stroke="#a8a8a8" stroke-width="1.2"/><circle cx="572.4" cy="726" r="3.0" fill="#222" stroke="#7ee0e6" stroke-width="1.2"/><polygon points="703.82,749.29 704.51,749.49 702.78,757.57 706.81,758.55 699.34,767.81 698.76,767.61 700.02,761.70 696.58,760.32" fill="#c8c8c4" stroke="#c8c8c4" stroke-width="0.6" stroke-linejoin="round"/><polygon points="674.00,812.13 674.75,812.34 672.88,820.95 677.25,822.00 669.12,831.87 668.50,831.66 669.88,825.36 666.12,823.89" fill="#c8c8c4" stroke="#c8c8c4" stroke-width="0.6" stroke-linejoin="round"/><circle cx="600" cy="901.6" r="3.0" fill="#222" stroke="#e6e4d8" stroke-width="1.2"/><polygon points="606,897.5 611.5,901.5 606,905.5" fill="#6a6a6a"/><circle cx="600" cy="919.2" r="3.0" fill="#222" stroke="#735fe1" stroke-width="1.2"/><circle cx="600" cy="919.2" r="1.4" fill="#735fe1"/><polyline points="904.6,950.2 907.0,952.6 911.6,947.4" fill="none" stroke="#e8e8e8" stroke-width="1.8"/><polyline points="919.5,950 922.5,954 925.5,950" fill="none" stroke="#a8a8a8" stroke-width="1.2"/><polyline points="904.6,987.7 907.0,990.1 911.6,984.9" fill="none" stroke="#e8e8e8" stroke-width="1.8"/><polyline points="919.5,987.5 922.5,991.5 925.5,987.5" fill="none" stroke="#a8a8a8" stroke-width="1.2"/><path d="M545,301.8 L559,301.8" fill="none" stroke="#4c4c4c" stroke-width="1.3"/><path d="M271,452.4 L277,452.4" fill="none" stroke="#4c4c4c" stroke-width="1.3"/><path d="M545,412.3 L559,412.3" fill="none" stroke="#4c4c4c" stroke-width="1.3"/><path d="M583,919 L596,919" fill="none" stroke="#4c4c4c" stroke-width="1.3"/><path d="M724.4,525 L724.4,537 C724.4,546 719,546.8 715,544.8 L689,532.5 C684,530.5 679.8,532 679.8,539 L679.8,553.7" fill="none" stroke="#00ff8e" stroke-width="3.6" stroke-linecap="round"/><path d="M733.8,778 L733.8,789 C733.8,796.5 737.5,797 742,794.5 L753,788.5 C758,785.5 762,786.5 762,793 L762,804.5" fill="none" stroke="#00ff8e" stroke-width="3.6" stroke-linecap="round"/></svg><svg width="1024" height="1005"><circle cx="670" cy="17.5" r="4.8" fill="#1c1c1c" stroke="#16a265" stroke-width="1.8"/><circle cx="778" cy="17.5" r="4.8" fill="#1c1c1c" stroke="#16a265" stroke-width="1.8"/><circle cx="724" cy="525" r="5" fill="#1c1c1c" stroke="#00ff8e" stroke-width="1.2"/><circle cx="724" cy="525" r="3.6" fill="#00ff8e"/><circle cx="680" cy="553.8" r="5" fill="#1c1c1c" stroke="#00ff8e" stroke-width="1.2"/><circle cx="680" cy="553.8" r="3.6" fill="#00ff8e"/><circle cx="787.8" cy="553.8" r="4.8" fill="#1c1c1c" stroke="#16a265" stroke-width="1.8"/><circle cx="733.8" cy="778" r="5" fill="#1c1c1c" stroke="#00ff8e" stroke-width="1.2"/><circle cx="733.8" cy="778" r="3.6" fill="#00ff8e"/><circle cx="762" cy="804.5" r="5" fill="#1c1c1c" stroke="#00ff8e" stroke-width="1.2"/><circle cx="762" cy="804.5" r="3.6" fill="#00ff8e"/></svg></div><div class="r" style="left:0.00px;top:1005.00px;width:1024.00px;height:19.00px;background:#232323;"></div><div class="r" style="left:0.00px;top:1005.00px;width:69.50px;height:19.00px;background:#3c3c3c;"></div><div class="t" style="left:18.60px;top:1011.27px;font-size:11.5px;line-height:11.5px;color:#d6d6d6;letter-spacing:0.45px;">Game</div><div class="r" style="left:0.00px;top:1024.00px;width:1024.00px;height:20.00px;background:#3a3a3a;"></div><div class="r" style="left:75.50px;top:1024.00px;width:1.00px;height:20.00px;background:#262626;"></div><div class="r" style="left:235.30px;top:1024.00px;width:1.00px;height:20.00px;background:#262626;"></div><div class="r" style="left:736.30px;top:1024.00px;width:1.00px;height:20.00px;background:#262626;"></div><div class="r" style="left:847.00px;top:1024.00px;width:1.00px;height:20.00px;background:#262626;"></div><div class="r" style="left:920.40px;top:1024.00px;width:1.00px;height:20.00px;background:#262626;"></div><div class="r" style="left:959.00px;top:1024.00px;width:1.00px;height:20.00px;background:#262626;"></div><div class="r" style="left:959.50px;top:1024.00px;width:64.50px;height:20.00px;background:#464646;"></div><div class="r" style="left:1010.00px;top:1027.00px;width:1.00px;height:14.00px;background:#2a2a2a;"></div><div class="t" style="left:0.00px;top:1028.57px;font-size:11.5px;line-height:11.5px;color:#d2d2d2;letter-spacing:0.45px;">Display 1</div><div class="t" style="left:79.40px;top:1028.57px;font-size:11.5px;line-height:11.5px;color:#d2d2d2;letter-spacing:0.45px;">Free Aspect</div><div class="t" style="left:242.50px;top:1028.57px;font-size:11.5px;line-height:11.5px;color:#d2d2d2;letter-spacing:0.45px;">Scale</div><div class="r" style="left:283.00px;top:1033.30px;width:146.00px;height:1.70px;background:#6c6c6c;border-radius:1px;"></div><div class="t" style="left:435.30px;top:1028.57px;font-size:11.5px;line-height:11.5px;color:#d2d2d2;letter-spacing:0.45px;">1x</div><div class="t" style="left:740.20px;top:1028.57px;font-size:11.5px;line-height:11.5px;color:#d2d2d2;letter-spacing:0.45px;">Maximize On Play</div><div class="t" style="left:851.20px;top:1028.57px;font-size:11.5px;line-height:11.5px;color:#d2d2d2;letter-spacing:0.45px;">Mute Audio</div><div class="t" style="left:924.30px;top:1028.57px;font-size:11.5px;line-height:11.5px;color:#d2d2d2;letter-spacing:0.45px;">Stats</div><div class="t" style="left:963.50px;top:1028.57px;font-size:11.5px;line-height:11.5px;color:#d2d2d2;letter-spacing:0.45px;">Gizmos</div><div class="r" style="left:0.00px;top:1044.00px;width:1024.00px;height:219.00px;background:#000000;"></div><div class="r" style="left:0.00px;top:1263.00px;width:1024.00px;height:3.00px;background:#1b1b1b;"></div><svg width="1024" height="1266" style="pointer-events:none"><rect x="3.5" y="1011.6" width="12.5" height="7.6" rx="3.8" fill="#d0d0d0"/><circle cx="13.5" cy="1014.2" r="0.9" fill="#3c3c3c"/><circle cx="11.6" cy="1016.4" r="0.9" fill="#3c3c3c"/><circle cx="2.2" cy="1012.8" r="4.8" fill="#9a9090"/><circle cx="1015" cy="1010" r="1" fill="#d0d0d0"/><circle cx="1015" cy="1013.5" r="1" fill="#d0d0d0"/><circle cx="1015" cy="1017" r="1" fill="#d0d0d0"/><polygon points="63.3,1032.2 70.6,1032.2 66.94999999999999,1036.6" fill="#cfcfcf"/><polygon points="223.8,1032.2 230.6,1032.2 227.2,1036.6" fill="#cfcfcf"/><circle cx="283.8" cy="1034.3" r="4.8" fill="#9a9a9a"/><polygon points="1015.4,1032.2 1021.4,1032.2 1018.4,1036.6" fill="#cfcfcf"/></svg></body></html>
